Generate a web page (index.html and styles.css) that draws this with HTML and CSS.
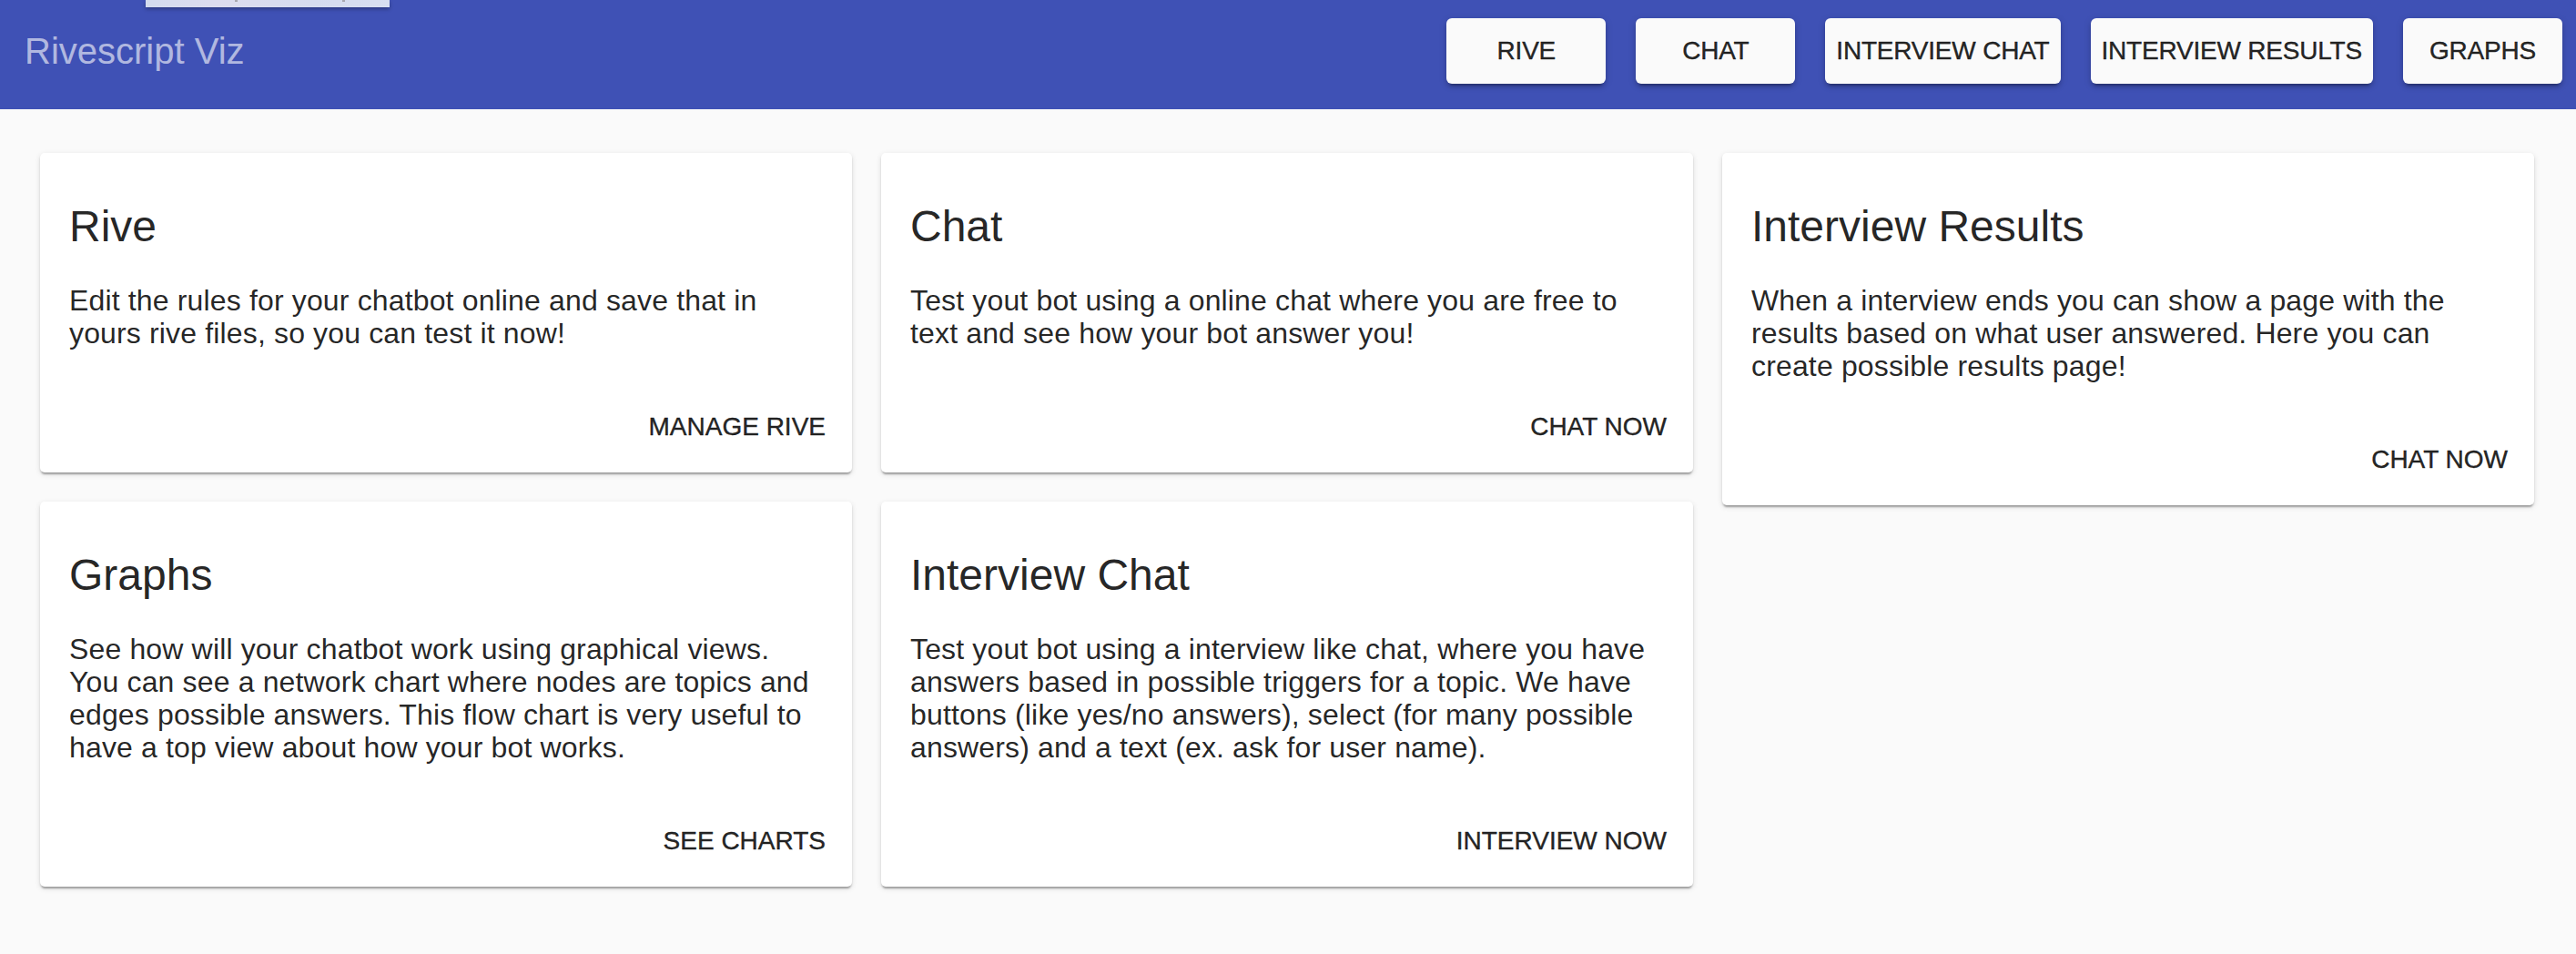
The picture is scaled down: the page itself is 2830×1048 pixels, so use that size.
FILE: index.html
```html
<!DOCTYPE html>
<html lang="en">
<head>
<meta charset="utf-8">
<title>Rivescript Viz</title>
<link rel="stylesheet" href="styles.css">
</head>
<body>
<div class="tab-peek"><span class="tick t1"></span><span class="tick t2"></span></div>
<header class="toolbar">
  <span class="brand">Rivescript Viz</span>
  <nav class="nav">
    <button class="nav-btn">RIVE</button>
    <button class="nav-btn">CHAT</button>
    <button class="nav-btn">INTERVIEW CHAT</button>
    <button class="nav-btn">INTERVIEW RESULTS</button>
    <button class="nav-btn">GRAPHS</button>
  </nav>
</header>
<main class="content">
  <div class="column">
    <section class="card">
      <h2 class="card-title">Rive</h2>
      <p class="card-text">Edit the rules for your chatbot online and save that in yours rive files, so you can test it now!</p>
      <div class="card-actions"><button class="action">MANAGE RIVE</button></div>
    </section>
    <section class="card">
      <h2 class="card-title">Graphs</h2>
      <p class="card-text">See how will your chatbot work using graphical views. You can see a network chart where nodes are topics and edges possible answers. This flow chart is very useful to have a top view about how your bot works.</p>
      <div class="card-actions"><button class="action">SEE CHARTS</button></div>
    </section>
  </div>
  <div class="column">
    <section class="card">
      <h2 class="card-title">Chat</h2>
      <p class="card-text">Test yout bot using a online chat where you are free to text and see how your bot answer you!</p>
      <div class="card-actions"><button class="action">CHAT NOW</button></div>
    </section>
    <section class="card">
      <h2 class="card-title">Interview Chat</h2>
      <p class="card-text">Test yout bot using a interview like chat, where you have answers based in possible triggers for a topic. We have buttons (like yes/no answers), select (for many possible answers) and a text (ex. ask for user name).</p>
      <div class="card-actions"><button class="action">INTERVIEW NOW</button></div>
    </section>
  </div>
  <div class="column">
    <section class="card">
      <h2 class="card-title">Interview Results</h2>
      <p class="card-text">When a interview ends you can show a page with the results based on what user answered. Here you can create possible results page!</p>
      <div class="card-actions"><button class="action">CHAT NOW</button></div>
    </section>
  </div>
</main>
</body>
</html>
```

FILE: styles.css
```css
* { box-sizing: border-box; }

html, body {
  margin: 0;
  padding: 0;
}

body {
  background: #fafafa;
  font-family: "Liberation Sans", Arial, Helvetica, sans-serif;
  color: rgba(0, 0, 0, 0.87);
  width: 2830px;
  min-height: 1048px;
  position: relative;
}

.tab-peek {
  position: absolute;
  top: 0;
  left: 160px;
  width: 268px;
  height: 8px;
  background: linear-gradient(90deg, #d3dbee 0%, #dcdcee 30%, #d5dcef 70%, #d8dff1 100%);
  box-shadow: 0 2px 4px rgba(0, 0, 0, 0.3);
  z-index: 5;
}

.tick {
  position: absolute;
  bottom: 6px;
  width: 3px;
  height: 2px;
  background: #a8a8b0;
}
.t1 { left: 98px; }
.t2 { left: 216px; }

.toolbar {
  height: 120px;
  background: #3f51b5;
  display: flex;
  align-items: center;
  justify-content: space-between;
  padding: 0 15px 0 27px;
}

.brand {
  font-size: 40px;
  color: rgba(255, 255, 255, 0.6);
  line-height: 1;
  margin-top: -8px;
}

.nav {
  display: flex;
  gap: 33px;
  align-self: flex-start;
  margin-top: 20px;
}

.nav-btn {
  font-family: inherit;
  font-size: 28px;
  line-height: 72px;
  height: 72px;
  min-width: 175px;
  padding: 0 12px;
  border: none;
  border-radius: 6px;
  background: #fafafa;
  color: rgba(0, 0, 0, 0.87);
  box-shadow: 0 6px 2px -4px rgba(0, 0, 0, 0.2), 0 4px 4px 0 rgba(0, 0, 0, 0.14), 0 2px 10px 0 rgba(0, 0, 0, 0.12);
  letter-spacing: -0.2px;
  -webkit-text-stroke: 0.4px rgba(0, 0, 0, 0.87);
}

.content {
  display: flex;
  gap: 32px;
  padding: 48px 46px 0 44px;
  align-items: flex-start;
}

.column {
  flex: 1 1 0;
  display: flex;
  flex-direction: column;
  gap: 32px;
}

.card {
  background: #fff;
  border-radius: 5px;
  padding: 49px 0 14px;
  box-shadow: 0 4px 2px -2px rgba(0, 0, 0, 0.2), 0 2px 2px 0 rgba(0, 0, 0, 0.14), 0 2px 6px 0 rgba(0, 0, 0, 0.12);
}

.card-title {
  margin: 0 32px;
  font-size: 48px;
  line-height: 64px;
  font-weight: 400;
}

.card-text {
  margin: 31px 34px 0 32px;
  font-size: 32px;
  line-height: 36px;
  letter-spacing: 0.15px;
}

.card-actions {
  display: flex;
  justify-content: flex-end;
  padding: 0 16px;
  margin-top: 49px;
}

.action {
  font-family: inherit;
  font-size: 28px;
  line-height: 72px;
  height: 72px;
  padding: 0 13px;
  border: none;
  background: transparent;
  color: rgba(0, 0, 0, 0.87);
  -webkit-text-stroke: 0.4px rgba(0, 0, 0, 0.87);
}
```
